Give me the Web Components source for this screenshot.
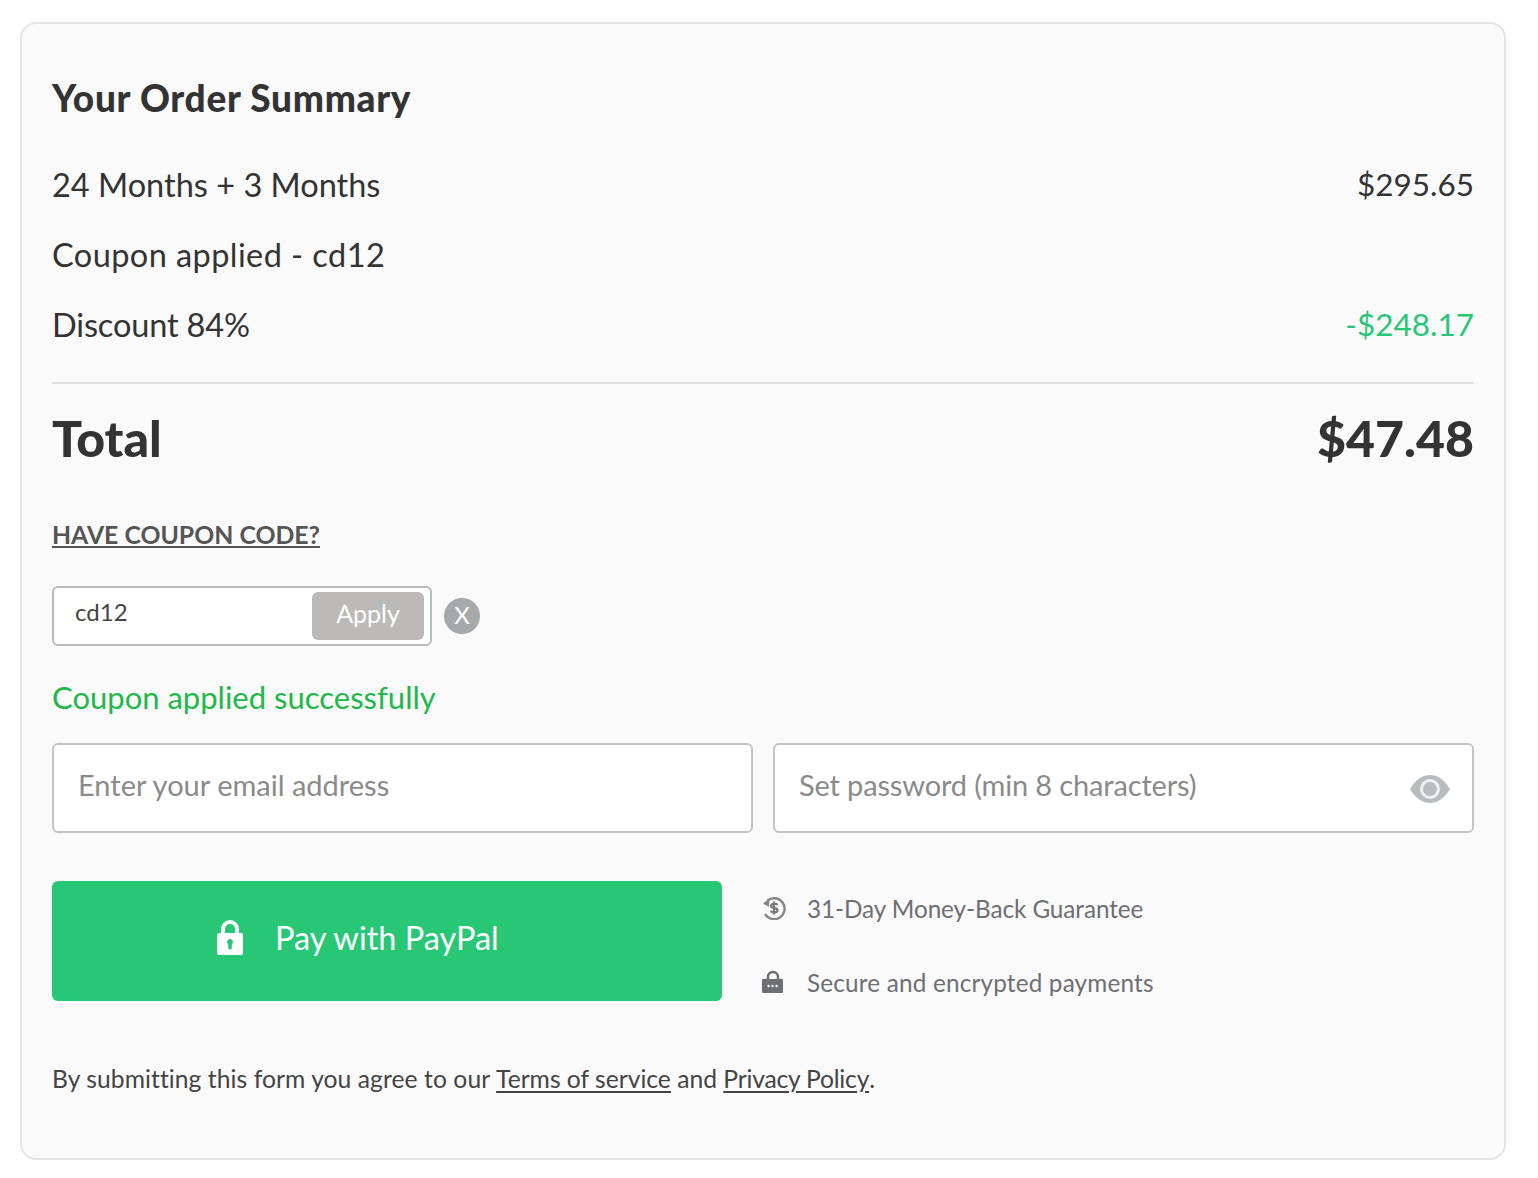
<!DOCTYPE html>
<html>
<head>
<meta charset="utf-8">
<style>
  html, body { margin: 0; padding: 0; background: #fff; }
  body { font-family: Lato, "Open Sans", sans-serif; color: #333; padding: 22px 32px 0 20px; }
</style>
</head>
<body>
<order-summary></order-summary>

<script>
class SummaryRow extends HTMLElement {
  constructor() {
    super();
    this.attachShadow({ mode: 'open' });
    this.shadowRoot.innerHTML = `
      <style>
        :host { display: flex; justify-content: space-between; align-items: center; height: 70px; font-size: 32.500px; color: #333; }
        .amount { font-size: 31.500px; color: var(--amount-color, #333); }
      </style>
      <span><slot></slot></span>
      <span class="amount"><slot name="amount"></slot></span>
    `;
  }
}
customElements.define('summary-row', SummaryRow);

class CouponForm extends HTMLElement {
  constructor() {
    super();
    this.attachShadow({ mode: 'open' });
    this.shadowRoot.innerHTML = `
      <style>
        :host { display: block; }
        * { box-sizing: border-box; }
        .link { display: flex; align-items: center; height: 30px; padding-bottom: 2px; font-size: 24.800px; font-weight: 700; color: #555; text-decoration: underline; }
        .line { display: flex; align-items: center; gap: 12px; margin-top: 36px; }
        .box { width: 380px; height: 60px; display: flex; align-items: center; justify-content: space-between; padding: 0 6px 0 21px; background: #fff; border: 2px solid #b9b9c0; border-radius: 6px; }
        .code { font-size: 24px; color: #444; position: relative; top: -5px; }
        .apply { width: 112px; height: 48px; display: flex; align-items: center; justify-content: center; background: #bbbab8; border-radius: 6px; color: #fff; font-size: 25px; padding-bottom: 6px; }
        .x { width: 36px; height: 36px; border-radius: 50%; background: #a6a9a9; color: #fff; font-size: 24px; display: flex; align-items: center; justify-content: center; padding-bottom: 4px; }
        .ok { display: flex; align-items: center; height: 40px; margin-top: 31px; font-size: 31px; color: #1fb84a; }
      </style>
      <div class="link">HAVE COUPON CODE?</div>
      <div class="line">
        <div class="box"><span class="code">cd12</span><span class="apply">Apply</span></div>
        <span class="x">X</span>
      </div>
      <div class="ok">Coupon applied successfully</div>
    `;
  }
}
customElements.define('coupon-form', CouponForm);

class TextField extends HTMLElement {
  constructor() {
    super();
    this.attachShadow({ mode: 'open' });
    this.shadowRoot.innerHTML = `
      <style>
        :host { display: flex; flex: 1; box-sizing: border-box; height: 90px; align-items: center; justify-content: space-between; padding: 0 22px 0 24px; background: #fff; border: 2px solid #c3c3c8; border-radius: 6px; }
        span { font-size: 29px; color: #8a8a8a; position: relative; top: -4px; letter-spacing: var(--field-spacing, 0); }
      </style>
      <span><slot></slot></span>
      <slot name="icon"></slot>
    `;
  }
}
customElements.define('text-field', TextField);

class OrderSummary extends HTMLElement {
  constructor() {
    super();
    this.attachShadow({ mode: 'open' });
    this.shadowRoot.innerHTML = `
      <style>
        :host { display: block; box-sizing: border-box; height: 1138px; padding: 48px 30px 0; background: #fafafa; border: 2px solid #e4e4e4; border-radius: 16px; }
        * { box-sizing: border-box; }
        h2 { margin: 0 0 27px; height: 50px; display: flex; align-items: center; font-size: 37px; font-weight: 900; letter-spacing: .7px; color: #333; }
        .green { --amount-color: #26c875; }
        .wide { letter-spacing: .42px; }
        .tight { letter-spacing: -.15px; }
        .rule { height: 2px; background: #e0e0e0; margin-top: 23px; }
        .total { display: flex; justify-content: space-between; align-items: center; height: 110px; padding-bottom: 2px; font-size: 50px; font-weight: 900; color: #333; }
        coupon-form { margin-top: 26px; }
        .fields { display: flex; gap: 20px; margin-top: 26px; }
        .eye { position: relative; top: 1px; filter: blur(.5px); }
        .pw { --field-spacing: -.15px; }
        .pay { display: flex; align-items: flex-start; margin-top: 48px; gap: 40px; }
        .btn { width: 670px; height: 120px; display: flex; align-items: center; gap: 32px; padding-left: 165px; background: #28c776; border-radius: 6px; color: #fff; font-size: 32.500px; }
        .btn span, .btn svg { position: relative; top: -4px; }
        .notes { display: flex; flex-direction: column; gap: 34px; padding-top: 7px; }
        .note { display: flex; align-items: center; gap: 21px; height: 40px; font-size: 24.300px; color: #6e6e75; }
        .note svg { width: 24px; display: block; }
        .money span { letter-spacing: -.07px; }
        .secure span { letter-spacing: .18px; }
        .secure svg { margin-left: -1px; margin-right: 1px; }
        .legal { margin-top: 56px; height: 40px; display: flex; align-items: center; font-size: 24.650px; color: #444; white-space: pre; }
        .legal u { text-underline-offset: 3px; }
        .legal .lead { letter-spacing: .07px; }
        .legal .policy { letter-spacing: -.2px; }
      </style>
      <h2>Your Order Summary</h2>
      <summary-row>24 Months + 3 Months<span slot="amount">$295.65</span></summary-row>
      <summary-row class="wide">Coupon applied - cd12</summary-row>
      <summary-row class="green"><span class="tight">Discount 84%</span><span slot="amount">-$248.17</span></summary-row>
      <div class="rule"></div>
      <div class="total"><span>Total</span><span>$47.48</span></div>
      <coupon-form></coupon-form>
      <div class="fields">
        <text-field>Enter your email address</text-field>
        <text-field class="pw">Set password (min 8 characters)
          <svg class="eye" slot="icon" width="40" height="28" viewBox="0 0 40 28"><path d="M0 14C6 4 13 0 20 0s14 4 20 14c-6 10-13 14-20 14S6 24 0 14z" fill="#b8bcbf"/><circle cx="20" cy="14" r="8.500" fill="none" stroke="#f1f2f2" stroke-width="3"/></svg>
        </text-field>
      </div>
      <div class="pay">
        <div class="btn">
          <svg width="26" height="35" viewBox="0 0 26 35"><path d="M6 15V9a7 7 0 0 1 14 0v6" fill="none" stroke="#fff" stroke-width="4"/><path fill="#fff" fill-rule="evenodd" d="M2 13h22a2 2 0 0 1 2 2v18a2 2 0 0 1-2 2H2a2 2 0 0 1-2-2V15a2 2 0 0 1 2-2zM13 19a3 3 0 0 0-1.800 5.400V29h3.600v-4.600A3 3 0 0 0 13 19z"/></svg>
          <span>Pay with PayPal</span>
        </div>
        <div class="notes">
          <div class="note money">
            <svg viewBox="0 0 24 24" height="24"><path d="M5.500 4.500A10.500 10.500 0 1 1 3 18" fill="none" stroke="#85858c" stroke-width="2.400"/><path d="M1 7.500 7.500 2.500 7 11z" fill="#85858c"/><path d="M15.500 8.800c-1-1.300-6.500-1.800-6.500 1.200 0 3.200 6.500 1.200 6.500 4.200 0 2.800-5.500 2.400-7 .8M12 5.500v13" fill="none" stroke="#77777e" stroke-width="2.200"/></svg>
            <span>31-Day Money-Back Guarantee</span>
          </div>
          <div class="note secure">
            <svg viewBox="0 0 22 24" height="24"><path d="M6 10V7a5 5 0 0 1 10 0v3" fill="none" stroke="#6e6e75" stroke-width="2.500"/><rect y="9" width="21" height="14" rx="1" fill="#6e6e75"/><circle cx="6.500" cy="16" r="1.200" fill="#fafafa"/><circle cx="10.500" cy="16" r="1.200" fill="#fafafa"/><circle cx="14.500" cy="16" r="1.200" fill="#fafafa"/></svg>
            <span>Secure and encrypted payments</span>
          </div>
        </div>
      </div>
      <div class="legal"><span class="lead">By submitting this form you agree to our </span><u>Terms of service</u> and <u class="policy">Privacy Policy</u>.</div>
    `;
  }
}
customElements.define('order-summary', OrderSummary);
</script>
</body>
</html>
